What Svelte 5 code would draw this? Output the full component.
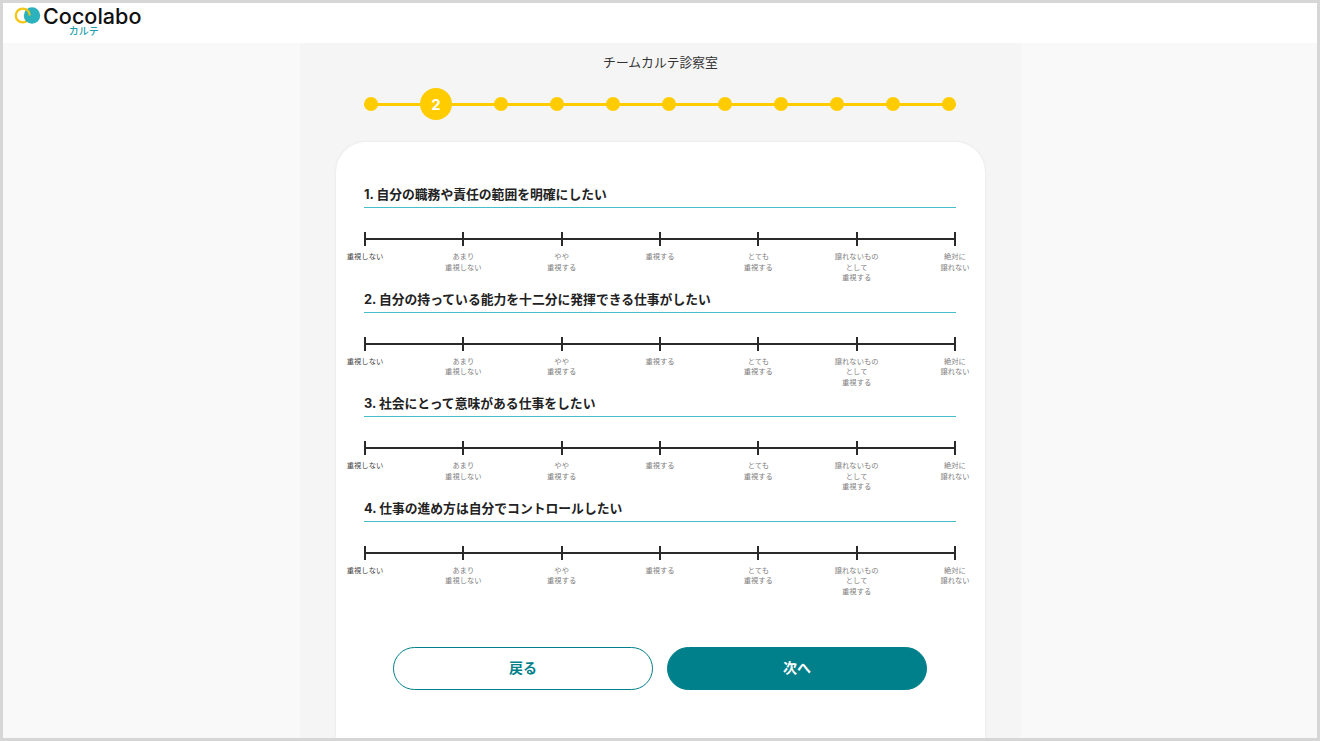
<script>
  const questions = [
    '自分の職務や責任の範囲を明確にしたい',
    '自分の持っている能力を十二分に発揮できる仕事がしたい',
    '社会にとって意味がある仕事をしたい',
    '仕事の進め方は自分でコントロールしたい'
  ];

  const choices = [
    ['重視しない'],
    ['あまり', '重視しない'],
    ['やや', '重視する'],
    ['重視する'],
    ['とても', '重視する'],
    ['譲れないもの', 'として', '重視する'],
    ['絶対に', '譲れない']
  ];

  const steps = [1, 2, 3, 4, 5, 6, 7, 8, 9, 10, 11];
  let current = 2;
</script>

<div class="frame">
  <header class="header">
    <div class="logo">
      <svg width="28" height="18" viewBox="0 0 28 18" aria-hidden="true">
        <circle cx="8.7" cy="8.5" r="6.9" fill="none" stroke="#f5c518" stroke-width="2.4" />
        <circle cx="18" cy="8.5" r="8.2" fill="#2bb2bd" />
        <path d="M11.6 2.2 A6.9 6.9 0 0 1 15.6 8.5" fill="none" stroke="#f5c518" stroke-width="2" />
      </svg>
      <div class="logo-text">
        <span class="brand">Cocolabo</span>
        <span class="sub">カルテ</span>
      </div>
    </div>
  </header>

  <main class="column">
    <h1 class="room">チームカルテ診察室</h1>

    <div class="stepper">
      {#each steps as step}
        {#if step === current}
          <span class="dot active">{step}</span>
        {:else}
          <span class="dot"></span>
        {/if}
      {/each}
    </div>

    <section class="card">
      {#each questions as question, i}
        <div class="question">
          <h2>{i + 1}. {question}</h2>
          <div class="scale">
            {#each choices as lines}
              <div class="stop">
                <span class="tick"></span>
                <div class="label" class:first={lines[0] === '重視しない'}>
                  {#each lines as line}
                    <span>{line}</span>
                  {/each}
                </div>
              </div>
            {/each}
          </div>
        </div>
      {/each}

      <div class="buttons">
        <button class="btn back">戻る</button>
        <button class="btn next">次へ</button>
      </div>
    </section>
  </main>
</div>

<style>
  :global(body) {
    margin: 0;
    font-family: Inter, "Noto Sans CJK JP", sans-serif;
    color: #222;
  }

  .frame {
    box-sizing: border-box;
    width: 1320px;
    height: 741px;
    border: 3px solid #d6d6d6;
    background: #f9f9f9;
    display: flex;
    flex-direction: column;
    overflow: hidden;
  }

  .header {
    flex-shrink: 0;
    height: 40px;
    background: #fff;
    padding-left: 11px;
  }

  .logo {
    display: flex;
    align-items: flex-start;
    gap: 1px;
    padding-top: 4px;
  }

  .logo-text {
    display: flex;
    flex-direction: column;
    align-items: center;
  }

  .brand {
    font-size: 21.6px;
    line-height: 18px;
    font-weight: 500;
    color: #111;
  }

  .sub {
    font-family: "Noto Sans CJK JP", sans-serif;
    font-size: 10px;
    line-height: 12px;
    font-weight: 500;
    color: #1f9fab;
    margin-right: 17px;
  }

  .column {
    flex: 1;
    box-sizing: border-box;
    width: 721px;
    min-height: 0;
    margin-left: 297px;
    padding: 0 36px;
    background: #f5f5f5;
    display: flex;
    flex-direction: column;
  }

  .room {
    margin: 10px 0 0;
    font-size: 12.8px;
    line-height: 20px;
    font-weight: 400;
    text-align: center;
    color: #333;
  }

  .stepper {
    position: relative;
    display: flex;
    align-items: center;
    gap: 42px;
    height: 32px;
    margin: 15px 0 0 28px;
    width: 592px;
  }

  .stepper::before {
    content: '';
    position: absolute;
    left: 0;
    right: 0;
    top: 50%;
    height: 3px;
    margin-top: -1.5px;
    background: #ffcc00;
  }

  .dot {
    position: relative;
    flex-shrink: 0;
    width: 14px;
    height: 14px;
    border-radius: 50%;
    background: #ffcc00;
  }

  .dot.active {
    width: 32px;
    height: 32px;
    display: flex;
    align-items: center;
    justify-content: center;
    color: #fff;
    font-size: 15px;
    font-weight: 700;
  }

  .card {
    flex: 1;
    margin-top: 22px;
    padding: 42px 29px 0 28px;
    background: #fff;
    box-shadow: 0 0 3px rgba(0, 0, 0, 0.08);
    border-radius: 30px 30px 0 0;
  }

  .question {
    height: 104.67px;
  }

  h2 {
    margin: 0;
    height: 23px;
    border-bottom: 1px solid #45bfca;
    font-size: 12.8px;
    line-height: 22px;
    font-weight: 700;
    color: #222;
  }

  .scale {
    position: relative;
    display: flex;
    justify-content: space-between;
    margin-top: 24px;
    width: 592px;
  }

  .scale::before {
    content: '';
    position: absolute;
    left: 0;
    right: 0;
    top: 6px;
    height: 2px;
    background: #2a2a2a;
  }

  .stop {
    position: relative;
    width: 2px;
    display: flex;
    flex-direction: column;
    align-items: center;
  }

  .tick {
    display: block;
    width: 2px;
    height: 14px;
    background: #2a2a2a;
  }

  .label {
    display: flex;
    flex-direction: column;
    align-items: center;
    margin-top: 6px;
    font-size: 7.3px;
    line-height: 10.5px;
    color: #808080;
    white-space: nowrap;
  }

  .label.first {
    color: #444;
  }

  .buttons {
    display: flex;
    justify-content: center;
    gap: 14px;
    margin-top: 44px;
  }

  .btn {
    box-sizing: border-box;
    width: 260px;
    height: 43px;
    padding-bottom: 3px;
    border-radius: 22px;
    border: 1px solid #00808a;
    font-family: inherit;
    font-size: 14px;
    font-weight: 700;
    cursor: pointer;
  }

  .back {
    background: #fff;
    color: #00808a;
  }

  .next {
    background: #00808a;
    color: #fff;
  }
</style>
